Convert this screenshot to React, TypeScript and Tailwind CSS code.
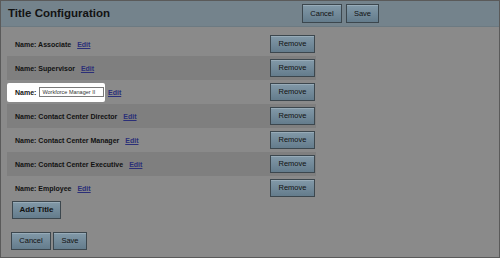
import React from 'react';

const titles = [
  'Associate',
  'Supervisor',
  null,
  'Contact Center Director',
  'Contact Center Manager',
  'Contact Center Executive',
  'Employee',
];

const btn =
  'border border-[#3c474e] bg-gradient-to-b from-[#8299a8] to-[#647c8c] text-[#111] shadow-[inset_0_1px_0_#97abb8]';

function EditLink() {
  return (
    <a href="#" className="ml-[6px] text-[7px] font-bold text-[#2b2f78] underline leading-none">
      Edit
    </a>
  );
}

export default function App() {
  return (
    <div className="w-[500px] h-[258px] bg-[#8a8a8a] border border-[#5a5a5a] font-['Liberation_Sans',Arial,sans-serif] flex flex-col overflow-hidden">
      <div className="h-[26px] shrink-0 bg-[#74838c] border-b border-[#6c7a82] flex items-center pl-[7px]">
        <h1 className="text-[11.5px] font-bold text-[#121212] leading-none">Title Configuration</h1>
        <div className="ml-auto mr-[120px] flex gap-[4px]">
          <button className={`${btn} w-[40px] h-[19px] text-[7.5px]`}>Cancel</button>
          <button className={`${btn} w-[33px] h-[19px] text-[7.5px]`}>Save</button>
        </div>
      </div>

      <div className="pt-[5px] pl-[6px]">
        <div className="w-[309px]">
          {titles.map((t, i) => (
            <div
              key={i}
              className={`h-[24px] flex items-center justify-between pr-[1px] ${i % 2 === 1 ? 'bg-[#7f7f7f]' : ''}`}
            >
              {t === null ? (
                <div className="flex items-center">
                  <div className="w-[98px] h-[19px] bg-white rounded-[2px] flex items-center pl-[8px]">
                    <span className="text-[7px] font-bold text-[#111] leading-none">Name:</span>
                    <input
                      readOnly
                      value="Workforce Manager II"
                      className="ml-[3px] w-[65px] h-[10px] border border-[#7a7a7a] bg-white px-[2px] text-[5.5px] text-[#333] outline-none leading-none"
                    />
                  </div>
                  <span className="-ml-[3px] flex">
                    <EditLink />
                  </span>
                </div>
              ) : (
                <div className="flex items-center pl-[8px]">
                  <span className="text-[7px] font-bold text-[#111] leading-none">Name: {t}</span>
                  <EditLink />
                </div>
              )}
              <button className={`${btn} w-[45px] h-[18px] text-[7.5px]`}>Remove</button>
            </div>
          ))}
        </div>
      </div>

      <div className="pl-[11px] mt-[1px] flex">
        <button className={`${btn} w-[49px] h-[18px] text-[8px] font-bold`}>Add Title</button>
      </div>

      <div className="pl-[10px] mt-[13px] flex gap-[2px]">
        <button className={`${btn} w-[40px] h-[18px] text-[7.5px]`}>Cancel</button>
        <button className={`${btn} w-[34px] h-[18px] text-[7.5px]`}>Save</button>
      </div>
    </div>
  );
}
